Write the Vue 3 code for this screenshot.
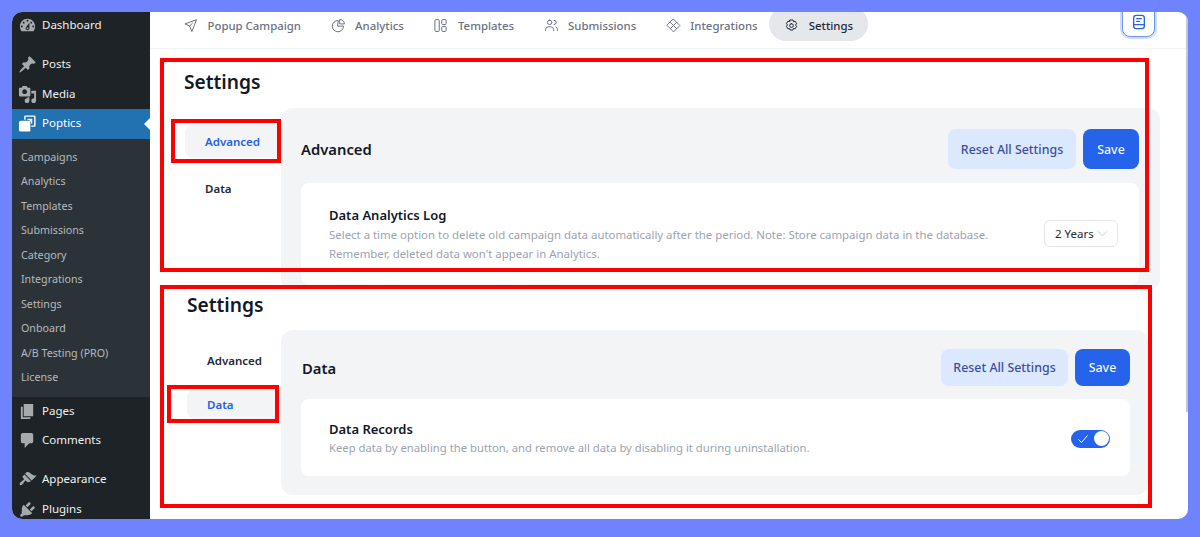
<template>
  <div class="page">
    <div class="window">
      <aside class="wp-menu">
        <a v-for="item in menuTop" :key="item.label" class="wp-item" :class="item.cls">
          <svg class="wp-icon" viewBox="0 0 20 20" fill="currentColor">
            <path v-for="d in item.icon" :key="d" :d="d" />
          </svg>
          <span>{{ item.label }}</span>
        </a>
        <div class="wp-sub">
          <a v-for="label in subMenu" :key="label">{{ label }}</a>
        </div>
        <a v-for="item in menuBottom" :key="item.label" class="wp-item" :class="item.cls">
          <svg class="wp-icon" viewBox="0 0 20 20" fill="currentColor">
            <path v-for="d in item.icon" :key="d" :d="d" />
          </svg>
          <span>{{ item.label }}</span>
        </a>
      </aside>

      <main class="main">
        <nav class="tabs">
          <a v-for="tab in tabs" :key="tab.label" class="tab" :class="{ active: tab.active }">
            <svg viewBox="0 0 24 24" fill="none" stroke="currentColor" stroke-width="1.6" stroke-linecap="round" stroke-linejoin="round">
              <path v-for="d in tab.paths" :key="d" :d="d" />
            </svg>
            {{ tab.label }}
          </a>
          <button class="help">
            <svg viewBox="0 0 24 24" fill="none" stroke="currentColor" stroke-width="2" stroke-linecap="round" stroke-linejoin="round">
              <path d="M4 6a4 4 0 0 1 4-4h8a4 4 0 0 1 4 4v12a4 4 0 0 1-4 4H8a4 4 0 0 1-4-4z" />
              <path d="M4 16h16M8.5 7h7M8.5 11h4" />
            </svg>
          </button>
        </nav>

        <section class="shot shot-one">
          <h1>Settings</h1>
          <div class="shot-body">
            <div class="side">
              <a class="side-link current">Advanced</a>
              <a class="side-link">Data</a>
            </div>
            <div class="panel">
              <header class="panel-head">
                <h2>Advanced</h2>
                <div class="actions">
                  <button class="btn-reset">Reset All Settings</button>
                  <button class="btn-save">Save</button>
                </div>
              </header>
              <div class="card">
                <div class="card-text">
                  <h3>Data Analytics Log</h3>
                  <p>Select a time option to delete old campaign data automatically after the period. Note: Store campaign data in the database.<br />Remember, deleted data won't appear in Analytics.</p>
                </div>
                <div class="select">
                  2 Years
                  <svg viewBox="0 0 12 12" fill="none" stroke="currentColor" stroke-width="1"><path d="M1 3.5l5 5 5-5" /></svg>
                </div>
              </div>
            </div>
          </div>
          <div class="mark mark-one"></div>
          <div class="mark mark-tab-one"></div>
        </section>

        <section class="shot shot-two">
          <h1>Settings</h1>
          <div class="shot-body">
            <div class="side">
              <a class="side-link">Advanced</a>
              <a class="side-link current">Data</a>
            </div>
            <div class="panel">
              <header class="panel-head">
                <h2>Data</h2>
                <div class="actions">
                  <button class="btn-reset">Reset All Settings</button>
                  <button class="btn-save">Save</button>
                </div>
              </header>
              <div class="card">
                <div class="card-text">
                  <h3>Data Records</h3>
                  <p>Keep data by enabling the button, and remove all data by disabling it during uninstallation.</p>
                </div>
                <div class="toggle">
                  <svg viewBox="0 0 12 12" fill="none" stroke="#fff" stroke-width="1"><path d="M1.5 6.5l3 3 6-7" /></svg>
                  <span class="knob"></span>
                </div>
              </div>
            </div>
          </div>
          <div class="mark mark-two"></div>
          <div class="mark mark-tab-two"></div>
        </section>
      </main>

      <div class="scrollbar"></div>
    </div>
  </div>
</template>

<script setup>
const icons = {
  dashboard: ['M3.76 16h12.48c1.1-1.37 1.76-3.11 1.76-5 0-4.42-3.58-8-8-8s-8 3.58-8 8c0 1.89.66 3.63 1.76 5zM10 4c.55 0 1 .45 1 1s-.45 1-1 1-1-.45-1-1 .45-1 1-1zM6 6c.55 0 1 .45 1 1s-.45 1-1 1-1-.45-1-1 .45-1 1-1zm8 0c.55 0 1 .45 1 1s-.45 1-1 1-1-.45-1-1 .45-1 1-1zm-5.37 5.55L12 7v6c0 1.1-.9 2-2 2s-2-.9-2-2c0-.57.24-1.08.63-1.45zM4 10c.55 0 1 .45 1 1s-.45 1-1 1-1-.45-1-1 .45-1 1-1zm12 0c.55 0 1 .45 1 1s-.45 1-1 1-1-.45-1-1 .45-1 1-1zm-5 3c0-.55-.45-1-1-1s-1 .45-1 1 .45 1 1 1 1-.45 1-1z'],
  posts: ['M10.44 3.02l1.82-1.82 6.36 6.35-1.83 1.82c-1.05-.68-2.48-.57-3.41.36l-.75.75c-.92.93-1.04 2.35-.35 3.41l-1.83 1.82-2.41-2.41-2.8 2.79c-.42.42-3.38 2.71-3.8 2.29s1.86-3.39 2.28-3.81l2.79-2.79L4.1 9.36l1.83-1.82c1.05.69 2.48.57 3.4-.36l.75-.75c.93-.92 1.05-2.35.36-3.41z'],
  media: ['M13 11V4c0-.55-.45-1-1-1h-1.67L9 1H5L3.67 3H2c-.55 0-1 .45-1 1v7c0 .55.45 1 1 1h10c.55 0 1-.45 1-1zM7 4.5c1.38 0 2.5 1.12 2.5 2.5S8.38 9.5 7 9.5 4.5 8.38 4.5 7 5.62 4.5 7 4.5zM14 6h5v10.5c0 1.38-1.12 2.5-2.5 2.5S14 17.88 14 16.5s1.12-2.5 2.5-2.5c.17 0 .34.02.5.05V9h-3V6zm-4 8.05V13h2v3.5c0 1.38-1.12 2.5-2.5 2.5S7 17.88 7 16.5 8.12 14 9.5 14c.17 0 .34.02.5.05z'],
  poptics: ['M8 1.5h9A1.5 1.5 0 0 1 18.5 3v9a1.5 1.5 0 0 1-1.5 1.5h-3V12h3V3H8v3H6.500V3A1.5 1.5 0 0 1 8 1.500zM10 5h5v5h-1.300V7.300L10.500 10.500l-1-1 3.200-3.200H10z', 'M3 7h9a1 1 0 0 1 1 1v9.500a1 1 0 0 1-1 1H3a2 2 0 0 1-2-2V9a2 2 0 0 1 2-2z'],
  pages: ['M6 15V2h10v13H6zm-1 1h8v2H3V5h2v11z'],
  comments: ['M5 2h9c1.1 0 2 .9 2 2v7c0 1.1-.9 2-2 2h-2l-5 5v-5H5c-1.1 0-2-.9-2-2V4c0-1.1.9-2 2-2z'],
  appearance: ['M14.48 11.06L7.41 3.99l1.5-1.5c.5-.56 2.3-.47 3.51.32 1.21.8 1.43 1.28 2.91 2.1 1.18.64 2.45 1.26 4.45.85zm-.71.71L6.7 4.7 4.93 6.47c-.39.39-.39 1.02 0 1.41l1.06 1.06c.39.39.39 1.03 0 1.42-.6.6-1.43 1.11-2.21 1.69-.35.26-.7.53-1.01.84-1.3 1.3-1.2 2.2-.7 2.7s1.4.6 2.7-.7c.31-.31.58-.66.84-1.01.58-.78 1.09-1.61 1.69-2.21.39-.39 1.03-.39 1.42 0l1.06 1.06c.39.39 1.02.39 1.41 0z'],
  plugins: ['M13.11 4.36L9.87 7.6 8 5.73l3.24-3.24c.35-.34 1.05-.2 1.56.32.52.51.66 1.21.31 1.55zm-8 1.77l.91-1.12 9.01 9.01-1.19.84c-.71.71-2.63 1.16-3.82 1.16H6.14L4.9 17.26c-.59.59-1.54.59-2.12 0-.59-.58-.59-1.53 0-2.12l1.24-1.24v-3.88c0-1.13.4-3.19 1.09-3.89zm7.26 3.97l3.24-3.24c.34-.35 1.04-.21 1.55.31.52.51.66 1.21.31 1.55l-3.24 3.25z']
}

const menuTop = [
  { label: 'Dashboard', icon: icons.dashboard, cls: 'first' },
  { label: 'Posts', icon: icons.posts },
  { label: 'Media', icon: icons.media },
  { label: 'Poptics', icon: icons.poptics, cls: 'current' }
]

const subMenu = ['Campaigns', 'Analytics', 'Templates', 'Submissions', 'Category', 'Integrations', 'Settings', 'Onboard', 'A/B Testing (PRO)', 'License']

const menuBottom = [
  { label: 'Pages', icon: icons.pages },
  { label: 'Comments', icon: icons.comments },
  { label: 'Appearance', icon: icons.appearance, cls: 'gap-above' },
  { label: 'Plugins', icon: icons.plugins }
]

const tabs = [
  { label: 'Popup Campaign', paths: ['M21 3L3 9.5l7.5 3.2L14 21z', 'M10.5 12.7L15 8.5'] },
  { label: 'Analytics', paths: ['M11 4a9 9 0 1 0 9 9h-9z', 'M14.5 2.5a7.5 7.5 0 0 1 7 7h-7z'] },
  { label: 'Templates', paths: ['M3 4a1.5 1.5 0 0 1 1.5-1.5h4A1.5 1.5 0 0 1 10 4v16a1.5 1.5 0 0 1-1.5 1.5h-4A1.5 1.5 0 0 1 3 20z', 'M14 4a1.5 1.5 0 0 1 1.5-1.5h4A1.5 1.5 0 0 1 21 4v5a1.5 1.5 0 0 1-1.5 1.5h-4A1.5 1.5 0 0 1 14 9z', 'M14 15a1.5 1.5 0 0 1 1.5-1.5h4A1.5 1.5 0 0 1 21 15v5a1.5 1.5 0 0 1-1.5 1.5h-4A1.5 1.5 0 0 1 14 20z'] },
  { label: 'Submissions', paths: ['M9 3.5a3.5 3.5 0 1 0 0 7 3.5 3.5 0 0 0 0-7z', 'M2.5 20v-2a5 5 0 0 1 5-4h3a5 5 0 0 1 5 4v2', 'M16 3.5a3.5 3.5 0 0 1 0 7', 'M19 14.2a5 5 0 0 1 2.5 3.8v2'] },
  { label: 'Integrations', paths: ['M12 1.800L22.200 12 12 22.200 1.800 12z', 'M7 7l10 10M17 7L7 17'] },
  { label: 'Settings', active: true, paths: ['M12 9a3 3 0 1 0 0 6 3 3 0 0 0 0-6z', 'M9.6 3.2h4.8l.8 2.6 2.6-.7 2.4 4.1-1.9 2 1.9 2-2.4 4.1-2.6-.7-.8 2.6H9.6l-.8-2.6-2.6.7-2.4-4.1 1.9-2-1.9-2 2.4-4.1 2.6.7z'] }
]
</script>

<style>
html,
body {
  margin: 0;
  background: #7083ff;
}
</style>

<style scoped>
.page {
  width: 1200px;
  height: 537px;
  padding: 12px;
  box-sizing: border-box;
  background: #7083ff;
  font-family: "Noto Sans", "Open Sans", sans-serif;
}

.window {
  position: relative;
  display: flex;
  width: 1176px;
  height: 507px;
  background: #fff;
  border-radius: 10px;
  overflow: hidden;
}

/* wp admin menu */
.wp-menu {
  flex: 0 0 138px;
  background: #1d2327;
  color: #f0f0f1;
  font-size: 11.5px;
  overflow: hidden;
}

.wp-item {
  display: flex;
  align-items: center;
  gap: 5px;
  height: 29.5px;
  padding-left: 6px;
  box-sizing: border-box;
}

.wp-item span {
  margin-bottom: 2px;
}

.wp-item.first {
  margin-bottom: 11px;
  height: 27px;
}

.wp-item.gap-above {
  margin-top: 9.5px;
}

.wp-icon {
  flex: none;
  width: 19px;
  height: 19px;
  color: #a7aaad;
}

.wp-item.current {
  position: relative;
  background: #2271b1;
  color: #fff;
}

.wp-item.current .wp-icon {
  color: #fff;
}

.wp-item.current::after {
  content: "";
  position: absolute;
  right: 0;
  top: 9px;
  border: 6px solid transparent;
  border-left: 0;
  border-right-color: #fff;
}

.wp-sub {
  display: flex;
  flex-direction: column;
  height: 258px;
  padding: 6px 0 0 9px;
  box-sizing: border-box;
  background: #2c3338;
  color: #b4b9be;
  font-size: 10.7px;
}

.wp-sub a {
  height: 24.5px;
  line-height: 24.5px;
}

/* plugin page */
.main {
  flex: 1;
  min-width: 0;
}

.tabs {
  display: flex;
  align-items: flex-start;
  height: 37px;
  box-sizing: border-box;
  padding: 0 33px 0 18.2px;
  border-bottom: 1px solid #f3f4f6;
  font-size: 11.4px;
  font-weight: 500;
  color: #6b7280;
}

.tab {
  display: flex;
  align-items: center;
  gap: 9.5px;
  height: 34px;
  margin-top: -5px;
  padding: 2px 14.8px 0;
  box-sizing: border-box;
  white-space: nowrap;
  border-radius: 17px;
}

.tab svg {
  flex: none;
  width: 15px;
  height: 15px;
}

.tab.active {
  margin-left: -3px;
  background: #e5e7eb;
  color: #1f2937;
}

.help {
  display: flex;
  align-items: center;
  justify-content: center;
  width: 33px;
  height: 33px;
  margin: -8px 0 0 auto;
  padding: 3px 0 0;
  color: #2563eb;
  background: #fff;
  border: 1px solid #6f95ea;
  border-radius: 8px;
  box-shadow: 0 0 0 2px #cfdcfa;
}

.help svg {
  width: 16px;
  height: 16px;
}

.shot {
  position: relative;
  background: #fff;
}

.shot h1 {
  margin: 0;
  font-size: 19.2px;
  line-height: 28px;
  font-weight: 600;
  color: #111827;
}

.shot-body {
  display: flex;
}

.side {
  flex: none;
  display: flex;
  flex-direction: column;
  font-size: 11.5px;
  font-weight: 600;
  color: #1f2937;
}

.side-link {
  display: flex;
  align-items: center;
  border-radius: 8px 0 0 8px;
}

.side-link.current {
  background: #f3f4f6;
  color: #2563eb;
}

.panel {
  flex: 1;
  min-width: 0;
  background: #f3f4f6;
  border-radius: 12px;
}

.panel-head {
  display: flex;
  align-items: center;
  justify-content: space-between;
}

.panel-head h2 {
  margin: 0;
  font-size: 14.8px;
  font-weight: 600;
  color: #111827;
}

.actions {
  display: flex;
  gap: 7px;
}

.actions button {
  border: 0;
  border-radius: 8px;
  font-family: inherit;
  font-size: 12.4px;
  font-weight: 500;
  padding: 0;
}

.btn-reset {
  background: #dbe8fe;
  color: #3b4fa0;
}

.btn-save {
  background: #2563eb;
  color: #eff4ff;
}

.card {
  display: flex;
  align-items: center;
  justify-content: space-between;
  background: #fff;
  border-radius: 8px;
  box-sizing: border-box;
}

.card h3 {
  margin: 0;
  font-size: 13px;
  line-height: 18px;
  font-weight: 600;
  color: #111827;
}

.card p {
  margin: 0;
  font-size: 11.28px;
  line-height: 19px;
  color: #9ca3af;
  white-space: nowrap;
}

.select {
  display: flex;
  align-items: center;
  justify-content: space-between;
  width: 74px;
  height: 27px;
  padding: 0 9px 0 10px;
  box-sizing: border-box;
  border: 1px solid #e5e7eb;
  border-radius: 6px;
  font-size: 11.5px;
  color: #1f2937;
}

.select svg {
  width: 11px;
  height: 11px;
  color: #c4c8ce;
}

.toggle {
  display: flex;
  align-items: center;
  justify-content: space-between;
  width: 39px;
  height: 18px;
  margin-right: -1px;
  padding: 0 1.5px 0 6px;
  box-sizing: border-box;
  background: #2563eb;
  border-radius: 9px;
}

.toggle svg {
  width: 12px;
  height: 12px;
}

.knob {
  width: 15px;
  height: 15px;
  background: #fff;
  border-radius: 50%;
}

/* first block */
.shot-one {
  height: 241px;
  padding: 19px 0 0 34px;
  box-sizing: border-box;
}

.shot-one .shot-body {
  margin: 12px 28px 0 1px;
  height: 182px;
}

.shot-one .side {
  width: 96px;
  padding-top: 17px;
}

.shot-one .side-link {
  height: 33px;
  padding-left: 20px;
}

.shot-one .side-link + .side-link {
  margin-top: 12px;
  height: 36px;
}

.shot-one .panel {
  padding: 21px 21px 0 20px;
}

.shot-one .actions button {
  height: 40px;
}

.shot-one .btn-reset {
  width: 128px;
}

.shot-one .btn-save {
  width: 56px;
}

.shot-one .card {
  height: 101px;
  margin-top: 14px;
  padding: 0 21px 0 28px;
  align-items: flex-start;
}

.shot-one .card-text {
  padding-top: 23px;
}

.shot-one .card p {
  margin-top: 1px;
  font-size: 11.42px;
}

.shot-one .select {
  margin-top: 37px;
}

/* second block */
.shot-two {
  width: 992px;
  height: 222px;
  margin: -5px 0 0 10px;
  padding: 6px 0 0 27px;
  box-sizing: border-box;
}

.shot-two .shot-body {
  margin-top: 11px;
  height: 165px;
}

.shot-two .side {
  width: 94px;
  padding-top: 15px;
}

.shot-two .side-link {
  height: 30px;
  padding-left: 20px;
}

.shot-two .side-link + .side-link {
  margin-top: 14px;
}

.shot-two .panel {
  margin-right: 4px;
  padding: 19px 18px 0 20px;
}

.shot-two h2 {
  margin-left: 1px;
}

.shot-two .actions button {
  height: 37px;
}

.shot-two .btn-reset {
  width: 127px;
}

.shot-two .btn-save {
  width: 55px;
}

.shot-two .card {
  height: 77px;
  margin-top: 13px;
  padding: 2px 21px 0 28px;
}

/* red annotation frames drawn over the page */
.mark {
  position: absolute;
  box-sizing: border-box;
  border: 4px solid #f00;
  pointer-events: none;
}

.mark-one {
  left: 10px;
  top: 9px;
  width: 989px;
  height: 214px;
}

.mark-tab-one {
  left: 21px;
  top: 70px;
  width: 110px;
  height: 44px;
}

.mark-two {
  left: 0;
  top: 0;
  width: 992px;
  height: 223px;
}

.mark-tab-two {
  left: 7px;
  top: 100px;
  width: 112px;
  height: 38px;
}

.scrollbar {
  position: absolute;
  top: 0;
  right: 0;
  width: 2px;
  height: 400px;
  background: #c3c7d2;
}
</style>
